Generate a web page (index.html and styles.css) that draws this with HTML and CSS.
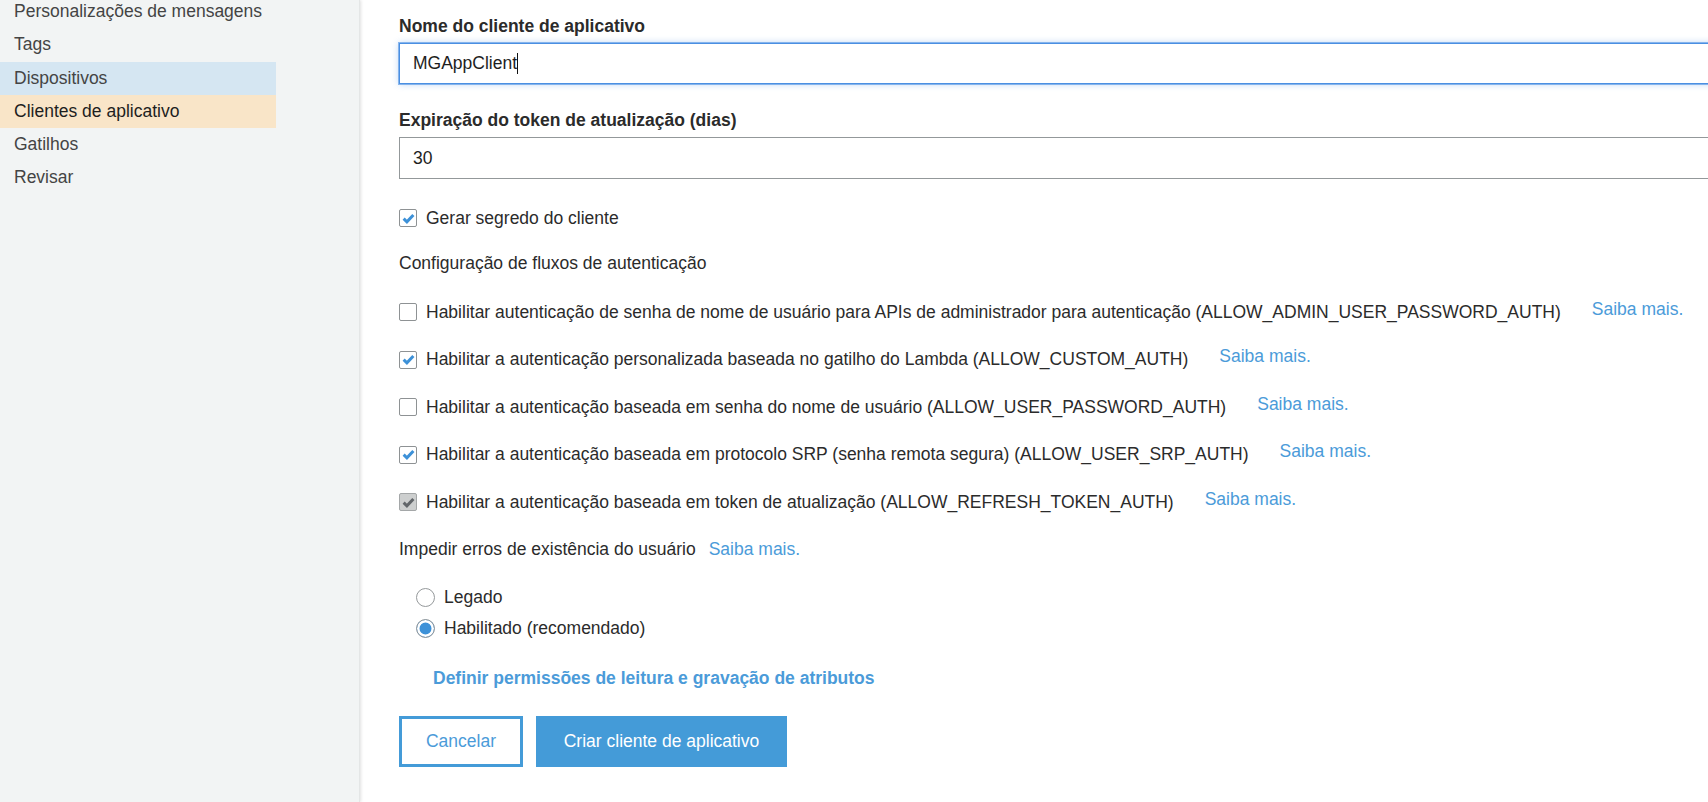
FILE: index.html
```html
<!DOCTYPE html>
<html lang="pt">
<head>
<meta charset="utf-8">
<title>Clientes de aplicativo</title>
<link rel="stylesheet" href="styles.css">
</head>
<body>
<div class="page">
  <aside class="sidebar">
    <ul class="nav">
      <li class="nav-item">Personalizações de mensagens</li>
      <li class="nav-item">Tags</li>
      <li class="nav-item hover">Dispositivos</li>
      <li class="nav-item active">Clientes de aplicativo</li>
      <li class="nav-item">Gatilhos</li>
      <li class="nav-item">Revisar</li>
    </ul>
  </aside>
  <main class="main">
    <div class="field-label first">Nome do cliente de aplicativo</div>
    <div class="text-input focused">MGAppClient<span class="caret"></span></div>
    <div class="field-label second">Expiração do token de atualização (dias)</div>
    <div class="text-input plain">30</div>

    <div class="check-row secret">
      <span class="cbox checked"><svg viewBox="0 0 16 16"><path d="M2.8 8.2 L6.3 11.6 L13.2 4.2" /></svg></span>
      <span class="check-text">Gerar segredo do cliente</span>
    </div>

    <div class="section-text">Configuração de fluxos de autenticação</div>

    <div class="flows">
      <div class="flow-row">
        <span class="cbox"></span>
        <span class="check-text">Habilitar autenticação de senha de nome de usuário para APIs de administrador para autenticação (ALLOW_ADMIN_USER_PASSWORD_AUTH)</span>
        <a class="more">Saiba mais.</a>
      </div>
      <div class="flow-row">
        <span class="cbox checked"><svg viewBox="0 0 16 16"><path d="M2.8 8.2 L6.3 11.6 L13.2 4.2" /></svg></span>
        <span class="check-text">Habilitar a autenticação personalizada baseada no gatilho do Lambda (ALLOW_CUSTOM_AUTH)</span>
        <a class="more">Saiba mais.</a>
      </div>
      <div class="flow-row">
        <span class="cbox"></span>
        <span class="check-text">Habilitar a autenticação baseada em senha do nome de usuário (ALLOW_USER_PASSWORD_AUTH)</span>
        <a class="more">Saiba mais.</a>
      </div>
      <div class="flow-row">
        <span class="cbox checked"><svg viewBox="0 0 16 16"><path d="M2.8 8.2 L6.3 11.6 L13.2 4.2" /></svg></span>
        <span class="check-text">Habilitar a autenticação baseada em protocolo SRP (senha remota segura) (ALLOW_USER_SRP_AUTH)</span>
        <a class="more">Saiba mais.</a>
      </div>
      <div class="flow-row">
        <span class="cbox disabled"><svg viewBox="0 0 16 16"><path d="M2.8 8.2 L6.3 11.6 L13.2 4.2" /></svg></span>
        <span class="check-text">Habilitar a autenticação baseada em token de atualização (ALLOW_REFRESH_TOKEN_AUTH)</span>
        <a class="more">Saiba mais.</a>
      </div>
      <div class="flow-row">
        <span class="plain-text">Impedir erros de existência do usuário</span>
        <a class="more near">Saiba mais.</a>
      </div>
    </div>

    <div class="radios">
      <div class="radio-row">
        <span class="radio"></span>
        <span class="check-text">Legado</span>
      </div>
      <div class="radio-row">
        <span class="radio on"></span>
        <span class="check-text">Habilitado (recomendado)</span>
      </div>
    </div>

    <a class="perm-link">Definir permissões de leitura e gravação de atributos</a>

    <div class="actions">
      <button class="btn btn-cancel">Cancelar</button>
      <button class="btn btn-primary">Criar cliente de aplicativo</button>
    </div>
  </main>
</div>
</body>
</html>
```

FILE: styles.css
```css
* { box-sizing: border-box; }

html, body {
  margin: 0;
  padding: 0;
  width: 1708px;
  height: 802px;
  overflow: hidden;
  background: #ffffff;
  font-family: "Liberation Sans", Arial, sans-serif;
  font-size: 17.5px;
  color: #2b2b2b;
}

.page {
  display: flex;
  height: 802px;
}

.sidebar {
  width: 360px;
  flex: 0 0 360px;
  background: #f2f4f4;
  box-shadow: 1px 0 3px rgba(0, 0, 0, 0.12);
  border-right: 1px solid #e4e6e6;
  position: relative;
  z-index: 1;
}

.nav {
  list-style: none;
  margin: -5px 0 0 0;
  padding: 0;
  width: 276px;
}

.nav-item {
  height: 33.3px;
  line-height: 33.3px;
  padding-left: 14px;
  color: #444444;
  white-space: nowrap;
}

.nav-item.hover { background: #d5e6f2; }
.nav-item.active { background: #f9e5c8; color: #1e1e1e; }

.main {
  flex: 1;
  overflow: hidden;
  padding-left: 39px;
}

.field-label {
  font-weight: bold;
  height: 20px;
  line-height: 20px;
  color: #2b2b2b;
  white-space: nowrap;
}
.field-label.first { margin-top: 16px; }
.field-label.second { margin-top: 26px; }

.text-input {
  margin-top: 7px;
  width: 1400px;
  padding-left: 13px;
  display: flex;
  align-items: center;
  background: #ffffff;
  color: #1e1e1e;
}
.text-input.focused {
  height: 41px;
  border: 1px solid #4a8fe2;
  box-shadow: 0 0 0 1px rgba(74, 143, 226, 0.6), 0 0 7px rgba(74, 143, 226, 0.4);
}
.text-input.plain {
  height: 42px;
  border: 1px solid #93989a;
}
.caret {
  display: inline-block;
  width: 1px;
  height: 21px;
  background: #111111;
}

.check-row {
  display: flex;
  align-items: center;
  height: 32px;
}
.check-row.secret { margin-top: 23px; }

.section-text {
  margin-top: 13px;
  height: 32px;
  line-height: 32px;
}

.flows { margin-top: 9.25px; }

.flow-row {
  display: flex;
  align-items: center;
  height: 47.5px;
  white-space: nowrap;
}

.cbox {
  flex: 0 0 18px;
  width: 18px;
  height: 18px;
  margin-right: 9px;
  border: 1px solid #8e9294;
  border-radius: 2px;
  background: #ffffff;
  display: flex;
  align-items: center;
  justify-content: center;
}
.cbox svg {
  width: 15px;
  height: 15px;
  fill: none;
  stroke: #3d91d8;
  stroke-width: 3.2;
  stroke-linecap: butt;
  stroke-linejoin: miter;
}
.cbox.disabled {
  background: #cdcfcf;
  border-color: #a4a7a8;
}
.cbox.disabled svg { stroke: #62666a; }

.check-text { color: #2b2b2b; }

.more {
  color: #4b9bd9;
  margin-left: 31px;
  margin-bottom: 6px;
  cursor: pointer;
}
.more.near {
  margin-left: 13px;
  margin-bottom: 0;
}

.radios {
  margin-top: 8.25px;
  margin-left: 17px;
}
.radio-row {
  display: flex;
  align-items: center;
  height: 31px;
}
.radio {
  width: 19px;
  height: 19px;
  margin-right: 9px;
  border: 1px solid #95999b;
  border-radius: 50%;
  background: #ffffff;
}
.radio.on {
  background: #3d91d8;
  box-shadow: inset 0 0 0 2.5px #ffffff;
}

.perm-link {
  display: block;
  margin-top: 19.5px;
  margin-left: 34px;
  height: 30px;
  line-height: 30px;
  font-weight: bold;
  color: #4b9bd9;
  cursor: pointer;
}

.actions {
  display: flex;
  gap: 13px;
  margin-top: 23px;
}

.btn {
  font-family: "Liberation Sans", Arial, sans-serif;
  font-size: 17.5px;
  height: 51px;
  cursor: pointer;
}
.btn-cancel {
  width: 124px;
  border: 3px solid #449bd8;
  background: #ffffff;
  color: #4b9bd9;
}
.btn-primary {
  width: 251px;
  border: none;
  background: #449bd8;
  color: #ffffff;
}
```
